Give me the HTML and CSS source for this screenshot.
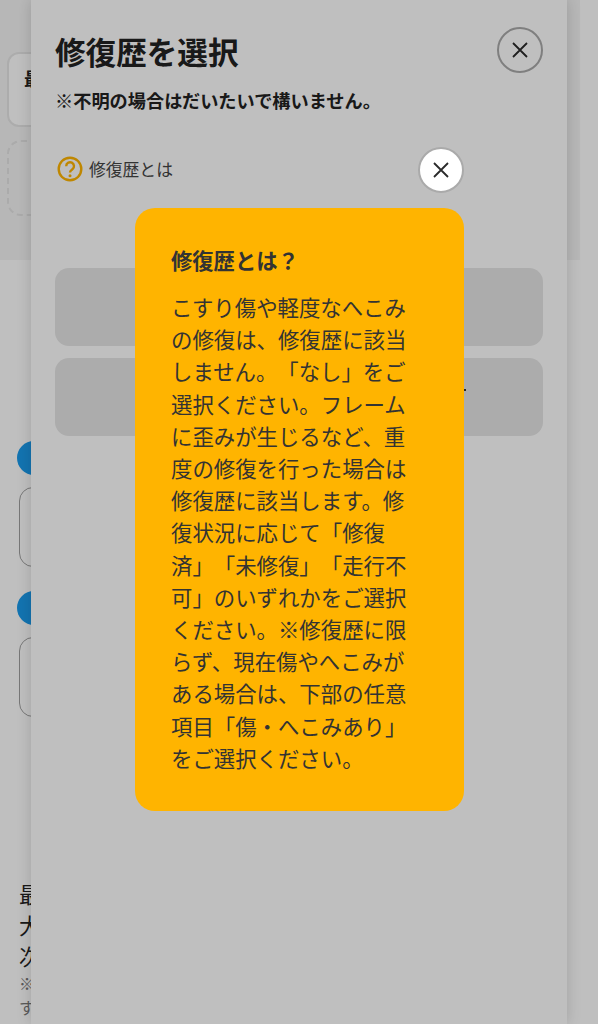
FILE: index.html
```html
<!DOCTYPE html>
<html lang="ja">
<head>
<meta charset="utf-8">
<title>修復歴を選択</title>
<link rel="stylesheet" href="styles.css">
</head>
<body>
<div class="page">
  <div class="band">
    <div class="summary"><span class="summary-text">最</span></div>
    <div class="dashed"></div>
  </div>
  <section class="steps">
    <div class="step"><span class="step-dot"></span><div class="step-box"></div></div>
    <div class="step"><span class="step-dot"></span><div class="step-box"></div></div>
  </section>
  <div class="notes">
    <p class="note-line">最</p>
    <p class="note-line">大</p>
    <p class="note-line">次</p>
    <p class="note-small">※</p>
    <p class="note-small">す</p>
  </div>
</div>
<div class="modal">
  <header class="modal-head">
    <div>
      <h1 class="modal-title">修復歴を選択</h1>
      <p class="modal-sub">※不明の場合はだいたいで構いません。</p>
    </div>
    <button class="close close-outline" aria-label="閉じる">
      <svg viewBox="0 0 20 20" class="close-icon"><path d="M3 3 17 17M17 3 3 17"/></svg>
    </button>
  </header>
  <div class="help">
    <svg viewBox="0 0 26 26" class="help-icon"><circle cx="13" cy="13" r="11.3"/><path d="M9.2 10.2a3.9 3.9 0 1 1 6.2 3.1c-1.4 1-2.4 1.6-2.4 3.2"/><circle class="help-dot" cx="13" cy="19.8" r="1.5"/></svg>
    <span class="help-text">修復歴とは</span>
  </div>
  <div class="options">
    <div class="option"></div>
    <div class="option"><span class="option-dot"></span></div>
  </div>
</div>
<div class="overlay"></div>
<button class="close close-white" aria-label="閉じる">
  <svg viewBox="0 0 20 20" class="close-icon"><path d="M3 3 17 17M17 3 3 17"/></svg>
</button>
<aside class="popup">
  <h2 class="popup-title">修復歴とは？</h2>
  <p class="popup-body">こすり傷や軽度なへこみの修復は、修復歴に該当しません。「なし」をご選択ください。フレームに歪みが生じるなど、重度の修復を行った場合は修復歴に該当します。修復状況に応じて「修復済」「未修復」「走行不可」のいずれかをご選択ください。※修復歴に限らず、現在傷やへこみがある場合は、下部の任意項目「傷・へこみあり」をご選択ください。</p>
</aside>
</body>
</html>
```
FILE: styles.css
```css
* { box-sizing: border-box; }
html, body { margin: 0; height: 1024px; overflow: hidden; }
body {
  position: relative;
  width: 598px;
  background: #fff;
  color: #222;
  font-family: "Noto Sans CJK JP", "Noto Sans", sans-serif;
  text-spacing-trim: space-all;
}
p, h1, h2 { margin: 0; }

.page { display: flex; flex-direction: column; }
.band {
  width: 580px;
  height: 260px;
  padding: 52px 0 0 7px;
  background: #f5f5f5;
  display: flex;
  flex-direction: column;
  gap: 13px;
}
.summary {
  width: 200px;
  height: 75px;
  padding: 11px 0 0 15px;
  background: #fff;
  border: 2px solid #e6e6e6;
  border-radius: 12px;
  font-size: 18px;
  font-weight: 700;
}
.dashed {
  width: 200px;
  height: 76px;
  border: 2px dashed #e4e4e4;
  border-radius: 14px;
}
.steps {
  padding: 181px 0 0 17px;
  display: flex;
  flex-direction: column;
  gap: 24px;
}
.step { display: flex; flex-direction: column; gap: 12px; }
.step-dot { width: 34px; height: 34px; border-radius: 50%; background: #1a9bec; }
.step-box {
  margin-left: 2px;
  width: 300px;
  height: 80px;
  border: 1.5px solid #a0a0a0;
  border-radius: 14px;
}
.notes { padding: 161px 0 0 19px; }
.note-line { font-size: 21.3px; line-height: 31px; }
.note-small { font-size: 16px; line-height: 24px; color: #777; }
.note-small:first-of-type { margin-top: 6px; }

.modal {
  position: absolute;
  top: 0;
  bottom: 0;
  left: 31px;
  width: 536px;
  padding: 26px 24px 0;
  background: #fff;
  box-shadow: 0 0 14px rgba(0, 0, 0, .16);
}
.modal-head { display: flex; justify-content: space-between; align-items: flex-start; }
.modal-title { font-size: 30.6px; line-height: 50px; font-weight: 700; }
.modal-sub { margin-top: 11px; font-size: 18.2px; line-height: 26px; font-weight: 700; }
.close {
  display: flex;
  align-items: center;
  justify-content: center;
  width: 46px;
  height: 46px;
  padding: 0;
  border: 2px solid #aaa;
  border-radius: 50%;
  background: transparent;
}
.close-outline { margin-top: 1px; }
.close-icon { width: 20px; height: 20px; fill: none; stroke: #2a2a2a; stroke-width: 1.8; }
.close-white { position: absolute; top: 147px; left: 418px; background: #fff; }
.help { margin-top: 43px; display: flex; align-items: center; gap: 6px; padding-left: 2px; height: 26px; }
.help-icon { width: 26px; height: 26px; fill: none; stroke: #ffb400; stroke-width: 2.4; }
.help-dot { fill: #ffb400; stroke: none; }
.help-text { font-size: 16.8px; color: #444; }
.options { margin-top: 86px; display: flex; flex-direction: column; gap: 12px; }
.option { position: relative; height: 78px; border-radius: 14px; background: #e6e6e6; }
.option-dot {
  position: absolute;
  left: 409px;
  top: 31px;
  width: 2px;
  height: 2px;
  background: #333;
}

.overlay { position: absolute; inset: 0; background: rgba(0, 0, 0, .25); }
.popup {
  position: absolute;
  top: 208px;
  left: 135px;
  width: 329px;
  height: 603px;
  padding: 35px 46px 0 36px;
  border-radius: 20px;
  background: #ffb400;
  color: #333;
}
.popup-title { font-size: 21.3px; line-height: 34px; font-weight: 700; }
.popup-body { margin-top: 14px; font-size: 21.4px; line-height: 32.2px; }
```
